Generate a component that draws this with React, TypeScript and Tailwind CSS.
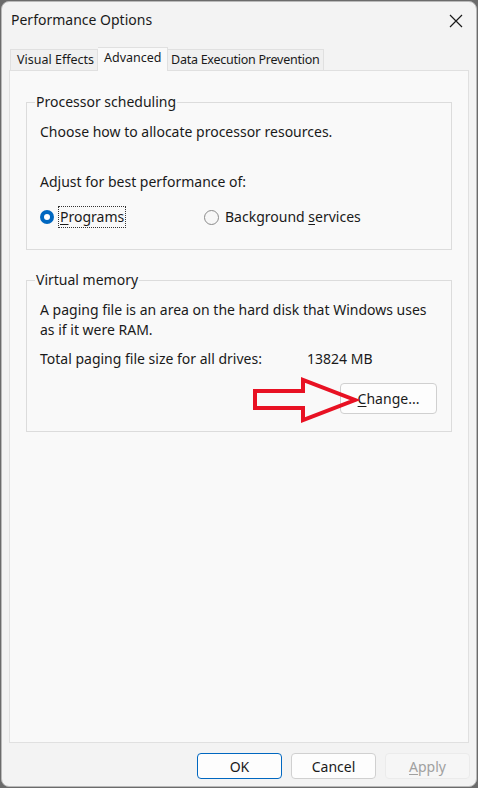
import React from "react";

const font = { fontFamily: '"Noto Sans", "Open Sans", sans-serif' };

function Radio({ checked }: { checked: boolean }) {
  return checked ? (
    <span className="w-[14px] h-[14px] rounded-full bg-[#0067c0] flex items-center justify-center shrink-0">
      <span className="w-[6px] h-[6px] rounded-full bg-white" />
    </span>
  ) : (
    <span className="w-[15px] h-[15px] rounded-full border border-[#8a8a8a] bg-[#f7f7f7] shrink-0" />
  );
}

export default function App() {
  return (
    <div className="w-[478px] h-[788px] bg-[#6b6b6b] p-[1px] text-[14px] text-[#1a1a1a]" style={font}>
      <div className="relative w-[476px] h-[786px] rounded-[8px] bg-[#f3f3f3] border border-[#b9b9b9] flex flex-col overflow-hidden">
        {/* Title bar */}
        <div className="h-[36px] flex items-center justify-between pl-[9px] pr-[13px] shrink-0">
          <span className="text-[14px] leading-[20px] text-[#1a1a1a]">Performance Options</span>
          <svg width="14" height="14" viewBox="0 0 14 14" className="mt-[1px]">
            <path d="M1 1 L13 13 M13 1 L1 13" stroke="#1a1a1a" strokeWidth="1.2" />
          </svg>
        </div>
        {/* Tabs */}
        <div className="flex items-end pl-[8px] h-[32px] shrink-0 whitespace-nowrap text-[12.5px]">
          <div className="h-[21px] pl-[6px] border border-b-0 border-[#e0e0e0] bg-[#f0f0f0] flex items-center w-[88px]">Visual Effects</div>
          <div className="h-[24px] pl-[6px] border border-b-0 border-l-0 border-[#e0e0e0] bg-[#f9f9f9] flex items-start pt-[1px] w-[70px] relative z-10 mb-[-1px]">Advanced</div>
          <div className="h-[21px] pl-[3px] border border-b-0 border-l-0 border-[#e0e0e0] bg-[#f0f0f0] flex items-center w-[156px] tracking-[-0.25px]">Data Execution Prevention</div>
        </div>
        {/* Panel */}
        <div className="mx-[7px] h-[673px] border border-[#e0e0e0] bg-[#f9f9f9] px-[16px] pt-[21px] shrink-0">
          <fieldset className="border border-[#dcdcdc] px-[13px] pb-[22px]">
            <legend className="ml-[-5px] px-[1px] leading-[20px]">Processor scheduling</legend>
            <div className="mt-[10px] leading-[20px]">Choose how to allocate processor resources.</div>
            <div className="mt-[30px] leading-[20px]">Adjust for best performance of:</div>
            <div className="mt-[15px] flex items-center h-[20px]">
              <Radio checked />
              <span className="ml-[5px] px-[1px] leading-[20px] outline-1 outline-dotted outline-[#333] outline-offset-[0px] w-[66px]">
                <span className="underline underline-offset-2">P</span>rograms
              </span>
              <span className="ml-[79px] flex items-center">
                <Radio checked={false} />
                <span className="ml-[6px] leading-[20px]">
                  Background <span className="underline underline-offset-2">s</span>ervices
                </span>
              </span>
            </div>
          </fieldset>
          <fieldset className="border border-[#dcdcdc] px-[13px] pb-[17px] mt-[20px]">
            <legend className="ml-[-5px] px-[1px] leading-[20px]">Virtual memory</legend>
            <div className="mt-[10px] leading-[20px]">
              A paging file is an area on the hard disk that Windows uses
              <br />
              as if it were RAM.
            </div>
            <div className="mt-[9px] flex leading-[20px]">
              <span className="w-[267px]">Total paging file size for all drives:</span>
              <span>13824 MB</span>
            </div>
            <div className="mt-[14px] flex justify-end pr-[1px]">
              <button className="w-[97px] h-[31px] rounded-[4px] border border-[#d0d0d0] bg-[#fdfdfd] leading-[20px]">
                <span className="underline underline-offset-2">C</span>hange...
              </button>
            </div>
          </fieldset>
        </div>
        {/* Bottom buttons */}
        <div className="flex justify-end gap-[9px] pr-[6px] pt-[10px] text-[14px]">
          <button className="w-[85px] h-[26px] rounded-[4px] border border-[#0067c0] bg-[#fdfdfd]">OK</button>
          <button className="w-[85px] h-[26px] rounded-[4px] border border-[#d0d0d0] bg-[#fdfdfd]">Cancel</button>
          <button className="w-[85px] h-[26px] rounded-[4px] border border-[#ebebeb] bg-[#f6f6f6] text-[#a0a0a0]">
            <span className="underline underline-offset-2">A</span>pply
          </button>
        </div>
        {/* Red arrow annotation */}
        <svg className="absolute left-[248px] top-[374px]" width="112" height="48" viewBox="0 0 112 48">
          <path
            d="M5 15 L53 15 L53 4 L105 24 L53 44 L53 32 L5 32 Z"
            fill="none"
            stroke="#e81123"
            strokeWidth="4"
            strokeLinejoin="miter"
          />
        </svg>
      </div>
    </div>
  );
}
